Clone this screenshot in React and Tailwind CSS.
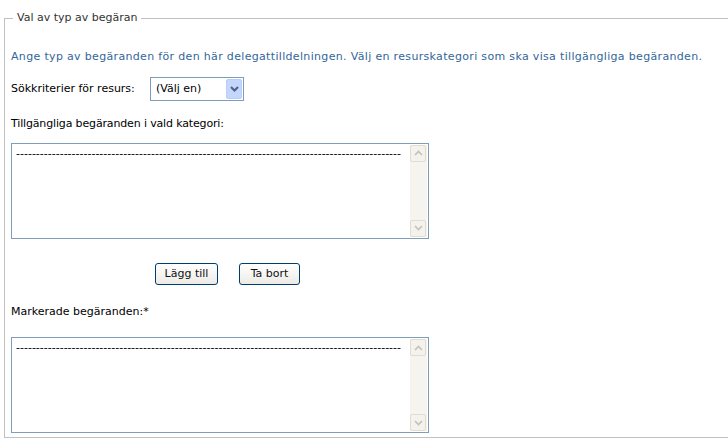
const dashes = '-'.repeat(97);

const ScrollArrow = ({ up }) => (
  <div className="w-[16px] h-[17px] border border-[#e1ded0] bg-[#f3f2ec] rounded-[2px] flex items-center justify-center">
    <svg width="9" height="6" viewBox="0 0 9 6">
      <path
        d={up ? 'M1 5 L4.5 1.5 L8 5' : 'M1 1 L4.5 4.5 L8 1'}
        fill="none"
        stroke="#c3c2b8"
        strokeWidth="1.6"
      />
    </svg>
  </div>
);

const ListBox = () => (
  <div className="w-[418px] h-[96px] border border-[#7f9db9] bg-white flex">
    <div className="flex-1 pl-[4px] pt-[3px] text-[11px] leading-[14px] text-black overflow-hidden whitespace-nowrap">
      {dashes}
    </div>
    <div className="w-[17px] my-[1px] mr-[1px] bg-[#f5f4ee] flex flex-col justify-between">
      <ScrollArrow up />
      <ScrollArrow />
    </div>
  </div>
);

const Button = ({ children, width }) => (
  <button
    className={`${width} h-[22px] border border-[#003c74] rounded-[3px] bg-gradient-to-b from-white to-[#ecebe6] text-[11px] font-normal text-[#111] leading-none`}
  >
    {children}
  </button>
);

const App = () => {
  return (
    <div
      className="w-[728px] h-[441px] bg-white overflow-hidden pt-[10px] pl-[4px]"
      style={{ fontFamily: '"DejaVu Sans", Tahoma, sans-serif' }}
    >
      <fieldset className="w-[760px] h-[428px] border-l border-t border-b border-[#c0c0c0] pl-[6px]">
        <legend className="ml-[2px] px-[4px] text-[11px] text-[#333]">Val av typ av begäran</legend>

        <p className="mt-[22px] text-[11px] tracking-[0.33px] text-[#336699]">
          Ange typ av begäranden för den här delegattilldelningen. Välj en resurskategori som ska visa tillgängliga begäranden.
        </p>

        <div className="mt-[12px] flex items-center text-[11px] text-black">
          <span className="w-[139px]">Sökkriterier för resurs:</span>
          <div className="w-[94px] h-[24px] border border-[#7f9db9] flex items-center justify-between pl-[5px] pr-[1px]">
            <span>(Välj en)</span>
            <div className="w-[16px] h-[20px] rounded-[2px] bg-[#c4d6fb] border border-[#b8cdf9] flex items-center justify-center">
              <svg width="9" height="6" viewBox="0 0 9 6">
                <path d="M1 1 L4.5 4.5 L8 1" fill="none" stroke="#4d6185" strokeWidth="2" />
              </svg>
            </div>
          </div>
        </div>

        <p className="mt-[15px] text-[11px] tracking-[-0.15px] text-black">Tillgängliga begäranden i vald kategori:</p>

        <div className="mt-[10px]">
          <ListBox />
        </div>

        <div className="mt-[24px] pl-[144px] flex gap-[21px]">
          <Button width="w-[63px]">Lägg till</Button>
          <Button width="w-[61px]">Ta bort</Button>
        </div>

        <p className="mt-[19px] text-[11px] text-black">Markerade begäranden:*</p>

        <div className="mt-[17px]">
          <ListBox />
        </div>
      </fieldset>
    </div>
  );
};

export default App;
